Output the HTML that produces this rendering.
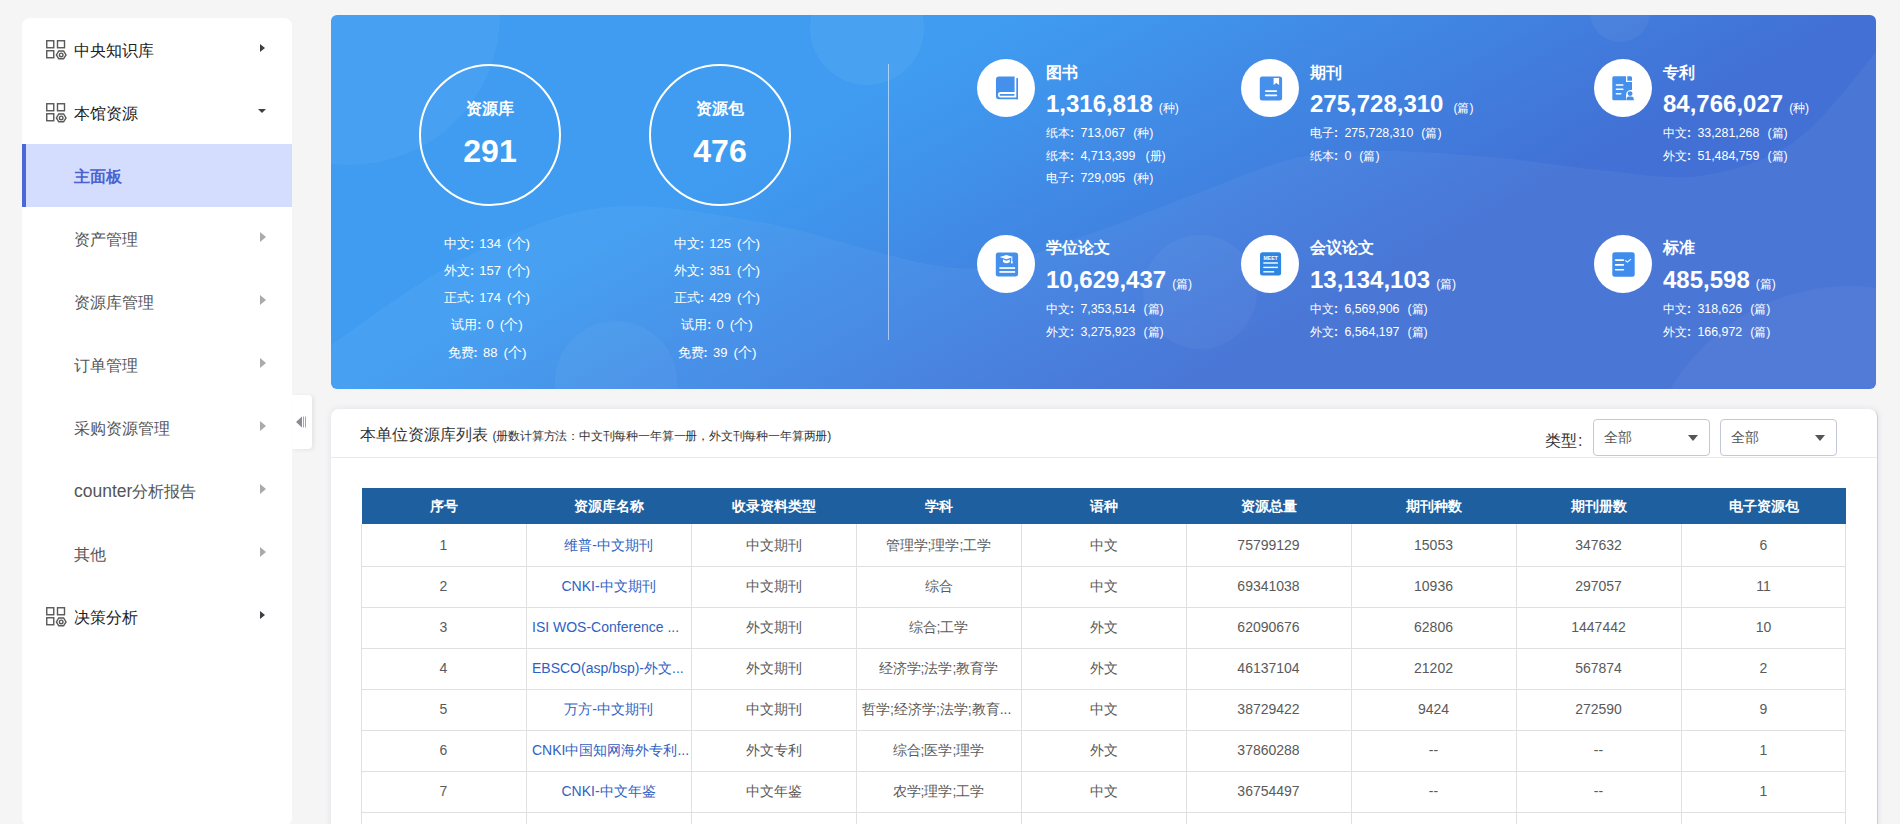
<!DOCTYPE html>
<html><head><meta charset="utf-8">
<style>
*{box-sizing:border-box;margin:0;padding:0}
html,body{width:1900px;height:824px;overflow:hidden;background:#f5f5f5;font-family:"Liberation Sans",sans-serif}
.abs{position:absolute}
#side{position:absolute;left:22px;top:18px;width:270px;height:808px;background:#fff;border-radius:8px;overflow:hidden}
.mi{position:absolute;left:0;width:270px;height:63px;font-size:16px;line-height:63px;color:#555}
.mi .t{position:absolute;left:52px;top:1px}
.mi.top{color:#222}
.mi.act{background:#d4ddfd;color:#4b62d0;font-weight:bold}
.mi.act:before{content:"";position:absolute;left:0;top:0;width:4px;height:63px;background:#4a68d6}
.arr{position:absolute;left:238px;width:0;height:0;border-top:4.7px solid transparent;border-bottom:4.7px solid transparent;border-left:5.5px solid #aaa}
.mi.top .arr{border-left-color:#3d3f47}
.ico{position:absolute;left:24px;top:22px}
#tog{position:absolute;left:292px;top:395px;width:20px;height:54px;background:#fff;border-radius:0 4px 4px 0;box-shadow:2px 1px 4px rgba(0,0,0,.07)}
#banner{position:absolute;left:331px;top:15px;width:1545px;height:374px;border-radius:6px;overflow:hidden;
 background:linear-gradient(151deg,#3f9cf1 31%,#4270d5 69%)}
.ring{position:absolute;width:142px;height:142px;border:2px solid #fff;border-radius:50%;color:#fff;text-align:center}
.ring .l{position:absolute;left:0;right:0;top:33px;font-size:16px;font-weight:bold;line-height:20px}
.ring .n{position:absolute;left:0;right:0;top:67px;font-size:32px;font-weight:bold;line-height:36px}
.st{position:absolute;width:200px;text-align:center;color:#fff;font-size:13px;line-height:16px}
.blk{position:absolute;color:#fff}
.blk .c{position:absolute;left:0;top:0;width:58px;height:58px;border-radius:50%;background:#fff}
.blk .c svg{position:absolute;left:0;top:0}
.blk .h{position:absolute;left:69px;top:5px;font-size:16px;font-weight:bold;line-height:18px;white-space:nowrap}
.blk .num{position:absolute;left:69px;top:31px;font-size:24px;font-weight:bold;line-height:28px;white-space:nowrap}
.blk .num small{font-size:12px;font-weight:normal;margin-left:6px}
.blk .s{position:absolute;left:69px;font-size:12.5px;line-height:16px;white-space:nowrap}
#card{position:absolute;left:331px;top:409px;width:1547px;height:430px;background:#fff;border-radius:8px;border-right:1px solid #c8cedb;box-shadow:0 0 6px rgba(180,190,210,.35)}
#card .title{position:absolute;left:29px;top:16px;font-size:16px;line-height:20px;color:#333;white-space:nowrap}
#card .title small{font-size:12px;color:#333;letter-spacing:-0.18px}
#card .sep{position:absolute;left:0;right:0;top:48px;height:1px;background:#e8eaf2}
.sel{position:absolute;top:10px;width:117px;height:37px;border:1px solid #c4c8d6;border-radius:4px;font-size:14px;color:#555;line-height:35px;padding-left:10px}
.sel:after{content:"";position:absolute;right:11px;top:15px;border-left:5.5px solid transparent;border-right:5.5px solid transparent;border-top:6px solid #555}
#tbl{position:absolute;left:30px;top:79px;width:1485px}
.th{position:absolute;top:0;height:36px;background:#1e5fa0;left:1px;width:1484px}
.thc{position:absolute;top:0;width:165px;height:36px;line-height:36px;text-align:center;color:#fff;font-size:14px;font-weight:bold}
.vl{position:absolute;width:1px;background:#e0e0e0}
.hl{position:absolute;height:1px;background:#e0e0e0;left:0;width:1485px}
.td{position:absolute;width:165px;height:41px;line-height:41px;text-align:center;font-size:14px;color:#5a5a5a;white-space:nowrap;overflow:hidden;padding:0 6px}
.td.b{color:#2f62c2}
.td.lft{text-align:left}

.kv .k{}
.kv .co{font-size:12px;margin-right:5.4px;font-weight:bold}
.kv .v{font-size:12px}
.kv .u{margin-left:6px}
.st.kv{font-size:12.5px}
.blk .s.kv{font-size:12.3px}
.lat{font-size:17.5px}

.st.kv .v{font-size:13px}
.st.kv .u{font-size:13.5px}
.blk .s.kv .u{margin-left:7.5px}

.mi.sub .arr{border-top-width:5px;border-bottom-width:5px;border-left-width:6px;left:237.5px}

.blk .s.kv .v{font-size:12.4px}
.blk .s.kv .co{margin-right:6.4px}
.blk .s.kv .u{margin-left:8px}
</style></head><body>
<div id="side">
<div class="mi top" style="top:0px">
<svg class="ico" width="22" height="20" viewBox="0 0 22 20"><g fill="none" stroke="#585858" stroke-width="1.4">
<rect x="0.75" y="0.75" width="7" height="7"/><rect x="11.5" y="0.75" width="7" height="7"/>
<rect x="0.75" y="10.75" width="7" height="7"/>
<path d="M12.8 11 L17.6 11 L20 14.9 L17.6 18.8 L12.8 18.8 L10.4 14.9 Z"/><circle cx="15.2" cy="14.9" r="1.8"/></g></svg>
<span class="t">中央知识库</span>
<span class="arr" style="top:25.5px"></span>
</div>
<div class="mi top" style="top:63px">
<svg class="ico" width="22" height="20" viewBox="0 0 22 20"><g fill="none" stroke="#585858" stroke-width="1.4">
<rect x="0.75" y="0.75" width="7" height="7"/><rect x="11.5" y="0.75" width="7" height="7"/>
<rect x="0.75" y="10.75" width="7" height="7"/>
<path d="M12.8 11 L17.6 11 L20 14.9 L17.6 18.8 L12.8 18.8 L10.4 14.9 Z"/><circle cx="15.2" cy="14.9" r="1.8"/></g></svg>
<span class="t">本馆资源</span>
<span class="abs" style="left:236px;top:28px;width:0;height:0;border-left:4px solid transparent;border-right:4px solid transparent;border-top:4.5px solid #3d3f47"></span>
</div>
<div class="mi act" style="top:126px">
<span class="t">主面板</span>
</div>
<div class="mi sub" style="top:189px">
<span class="t">资产管理</span>
<span class="arr" style="top:25px"></span>
</div>
<div class="mi sub" style="top:252px">
<span class="t">资源库管理</span>
<span class="arr" style="top:25px"></span>
</div>
<div class="mi sub" style="top:315px">
<span class="t">订单管理</span>
<span class="arr" style="top:25px"></span>
</div>
<div class="mi sub" style="top:378px">
<span class="t">采购资源管理</span>
<span class="arr" style="top:25px"></span>
</div>
<div class="mi sub" style="top:441px">
<span class="t"><span class="lat">counter</span>分析报告</span>
<span class="arr" style="top:25px"></span>
</div>
<div class="mi sub" style="top:504px">
<span class="t">其他</span>
<span class="arr" style="top:25px"></span>
</div>
<div class="mi top" style="top:567px">
<svg class="ico" width="22" height="20" viewBox="0 0 22 20"><g fill="none" stroke="#585858" stroke-width="1.4">
<rect x="0.75" y="0.75" width="7" height="7"/><rect x="11.5" y="0.75" width="7" height="7"/>
<rect x="0.75" y="10.75" width="7" height="7"/>
<path d="M12.8 11 L17.6 11 L20 14.9 L17.6 18.8 L12.8 18.8 L10.4 14.9 Z"/><circle cx="15.2" cy="14.9" r="1.8"/></g></svg>
<span class="t">决策分析</span>
<span class="arr" style="top:25.5px"></span>
</div>
</div>
<div id="tog"><svg class="abs" style="left:4px;top:21px" width="12" height="12" viewBox="0 0 12 12"><path d="M0 6 L6 0.5 L6 11.5 Z" fill="#8a8c94"/><rect x="7.1" y="0.5" width="0.9" height="11" fill="#9a9ca4"/><rect x="9.1" y="0.5" width="0.9" height="11" fill="#9a9ca4"/></svg></div>
<div id="banner">
<svg class="abs" style="left:0;top:0" width="1545" height="374" viewBox="0 0 1545 374">
<circle cx="19" cy="0" r="150" fill="#fff" fill-opacity="0.045"/>
<circle cx="536" cy="13" r="57" fill="#fff" fill-opacity="0.05"/>
<circle cx="285" cy="367" r="61" fill="#fff" fill-opacity="0.04"/>
<circle cx="1289" cy="-3" r="30" fill="#fff" fill-opacity="0.05"/>
<circle cx="869" cy="277" r="57" fill="#fff" fill-opacity="0.04"/>
<path d="M0 330 C21.5 315.8 84.2 267.8 129 245 C173.8 222.2 219.0 199.3 269 193 C319.0 186.7 369.5 197.0 429 207 C488.5 217.0 574.0 250.0 626 253 C678.0 256.0 700.5 237.7 741 225 C781.5 212.3 831.0 190.8 869 177 C907.0 163.2 937.3 148.8 969 142 C1000.7 135.2 1025.7 135.8 1059 136 C1092.3 136.2 1134.0 139.8 1169 143 C1204.0 146.2 1237.7 151.8 1269 155 C1300.3 158.2 1330.3 163.7 1357 162 C1383.7 160.3 1408.2 153.5 1429 145 C1449.8 136.5 1462.7 129.0 1482 111 C1501.3 93.0 1534.5 49.3 1545 37 L 1545 374 L 0 374 Z" fill="#fff" fill-opacity="0.045"/>
<circle cx="1519" cy="479" r="208" fill="#fff" fill-opacity="0.04"/>
</svg>
<div class="ring" style="left:88px;top:49px"><div class="l">资源库</div><div class="n">291</div></div>
<div class="st kv" style="left:56px;top:220.5px"><span class="k">中文</span><span class="co">:</span><span class="v">134</span><span class="u">(个)</span></div>
<div class="st kv" style="left:56px;top:247.8px"><span class="k">外文</span><span class="co">:</span><span class="v">157</span><span class="u">(个)</span></div>
<div class="st kv" style="left:56px;top:275.1px"><span class="k">正式</span><span class="co">:</span><span class="v">174</span><span class="u">(个)</span></div>
<div class="st kv" style="left:56px;top:302.4px"><span class="k">试用</span><span class="co">:</span><span class="v">0</span><span class="u">(个)</span></div>
<div class="st kv" style="left:56px;top:329.7px"><span class="k">免费</span><span class="co">:</span><span class="v">88</span><span class="u">(个)</span></div>
<div class="ring" style="left:318px;top:49px"><div class="l">资源包</div><div class="n">476</div></div>
<div class="st kv" style="left:286px;top:220.5px"><span class="k">中文</span><span class="co">:</span><span class="v">125</span><span class="u">(个)</span></div>
<div class="st kv" style="left:286px;top:247.8px"><span class="k">外文</span><span class="co">:</span><span class="v">351</span><span class="u">(个)</span></div>
<div class="st kv" style="left:286px;top:275.1px"><span class="k">正式</span><span class="co">:</span><span class="v">429</span><span class="u">(个)</span></div>
<div class="st kv" style="left:286px;top:302.4px"><span class="k">试用</span><span class="co">:</span><span class="v">0</span><span class="u">(个)</span></div>
<div class="st kv" style="left:286px;top:329.7px"><span class="k">免费</span><span class="co">:</span><span class="v">39</span><span class="u">(个)</span></div>
<div class="abs" style="left:557px;top:49px;width:1px;height:276px;background:rgba(255,255,255,.55)"></div>
<div class="blk" style="left:646px;top:44px">
<div class="c"><svg width="58" height="58" viewBox="0 0 58 58"><path d="M21.95 17.4 H37.6 V33.1 H23.65 A2.75 2.75 0 0 0 23.65 38.6 H41 V40.3 H21.95 A3 3 0 0 1 18.95 37.3 V20.4 A3 3 0 0 1 21.95 17.4 Z" fill="#4590ec"/>
<rect x="39.3" y="19.1" width="1.7" height="21.2" fill="#4590ec"/>
<rect x="22.6" y="35" width="15" height="1.7" rx=".85" fill="#4590ec"/></svg></div>
<div class="h">图书</div>
<div class="num">1,316,818<small>(种)</small></div>
<div class="s kv" style="top:66.0px"><span class="k">纸本</span><span class="co">:</span><span class="v">713,067</span><span class="u">(种)</span></div>
<div class="s kv" style="top:88.5px"><span class="k">纸本</span><span class="co">:</span><span class="v">4,713,399</span><span class="u" style="margin-left:10px">(册)</span></div>
<div class="s kv" style="top:111.0px"><span class="k">电子</span><span class="co">:</span><span class="v">729,095</span><span class="u">(种)</span></div>
</div>
<div class="blk" style="left:910px;top:44px">
<div class="c"><svg width="58" height="58" viewBox="0 0 58 58"><rect x="18.8" y="17.4" width="22.3" height="24" rx="2.5" fill="#4590ec"/>
<path d="M32.6 18.9 H38.1 V25.9 L35.35 24.1 L32.6 25.9 Z" fill="#fff"/>
<rect x="23.9" y="31.2" width="12.3" height="1.7" rx=".8" fill="#fff"/><rect x="23.9" y="35.5" width="12.3" height="1.7" rx=".8" fill="#fff"/></svg></div>
<div class="h">期刊</div>
<div class="num">275,728,310<small style="margin-left:10px">(篇)</small></div>
<div class="s kv" style="top:66.0px"><span class="k">电子</span><span class="co">:</span><span class="v">275,728,310</span><span class="u">(篇)</span></div>
<div class="s kv" style="top:88.5px"><span class="k">纸本</span><span class="co">:</span><span class="v">0</span><span class="u">(篇)</span></div>
</div>
<div class="blk" style="left:1263px;top:44px">
<div class="c"><svg width="58" height="58" viewBox="0 0 58 58"><path d="M19.8 17.2 H32 V23 H38 V31 A5 5 0 0 0 32 36 V41.2 H19.8 A1.5 1.5 0 0 1 18.3 39.7 V18.7 A1.5 1.5 0 0 1 19.8 17.2 Z" fill="#4590ec"/>
<path d="M33.3 17.2 H36.5 A1.5 1.5 0 0 1 38 18.7 V21.7 H33.3 Z" fill="#4590ec"/>
<rect x="21.6" y="25.2" width="8" height="1.6" rx=".8" fill="#fff"/><rect x="21.6" y="29.5" width="8" height="1.6" rx=".8" fill="#fff"/><rect x="21.6" y="33.9" width="6" height="1.6" rx=".8" fill="#fff"/>
<circle cx="36.1" cy="34.6" r="2.4" fill="#4590ec"/><path d="M32.4 41.2 V39.8 A2.5 2.5 0 0 1 34.9 37.6 H37.3 A2.5 2.5 0 0 1 39.8 39.8 V41.2 Z" fill="#4590ec"/></svg></div>
<div class="h">专利</div>
<div class="num">84,766,027<small>(种)</small></div>
<div class="s kv" style="top:66.0px"><span class="k">中文</span><span class="co">:</span><span class="v">33,281,268</span><span class="u">(篇)</span></div>
<div class="s kv" style="top:88.5px"><span class="k">外文</span><span class="co">:</span><span class="v">51,484,759</span><span class="u">(篇)</span></div>
</div>
<div class="blk" style="left:646px;top:220px">
<div class="c"><svg width="58" height="58" viewBox="0 0 58 58"><rect x="18.8" y="17.4" width="22.3" height="24" rx="2.5" fill="#4590ec"/>
<path d="M22.6 22.1 L29.4 19.9 L36.2 22.1 L29.4 24.3 Z" fill="#fff"/>
<path d="M26 24.6 L29.4 25.7 L32.8 24.6 V27 Q29.4 29.6 26 27 Z" fill="#fff"/>
<rect x="34.3" y="22.5" width="1" height="4.5" fill="#fff"/><rect x="33.9" y="26.4" width="1.8" height="2" fill="#fff"/>
<rect x="22.4" y="32.2" width="15.7" height="1.7" fill="#fff"/><rect x="22.4" y="36.1" width="15.7" height="1.7" fill="#fff"/></svg></div>
<div class="h" style="top:4px">学位论文</div>
<div class="num">10,629,437<small>(篇)</small></div>
<div class="s kv" style="top:66.0px"><span class="k">中文</span><span class="co">:</span><span class="v">7,353,514</span><span class="u">(篇)</span></div>
<div class="s kv" style="top:88.5px"><span class="k">外文</span><span class="co">:</span><span class="v">3,275,923</span><span class="u">(篇)</span></div>
</div>
<div class="blk" style="left:910px;top:220px">
<div class="c"><svg width="58" height="58" viewBox="0 0 58 58"><rect x="19" y="17.3" width="21.1" height="23.1" rx="2.5" fill="#2f86e2"/>
<text x="29.6" y="24.8" font-family="Liberation Sans" font-weight="bold" font-size="4.6" fill="#fff" text-anchor="middle" textLength="14.4" lengthAdjust="spacingAndGlyphs">MEET</text>
<rect x="22.3" y="27.3" width="14.6" height="1.4" fill="#fff"/><rect x="22.3" y="31.7" width="14.6" height="1.4" fill="#fff"/><rect x="22.3" y="36.1" width="10.9" height="1.4" fill="#fff"/></svg></div>
<div class="h" style="top:4px">会议论文</div>
<div class="num">13,134,103<small>(篇)</small></div>
<div class="s kv" style="top:66.0px"><span class="k">中文</span><span class="co">:</span><span class="v">6,569,906</span><span class="u">(篇)</span></div>
<div class="s kv" style="top:88.5px"><span class="k">外文</span><span class="co">:</span><span class="v">6,564,197</span><span class="u">(篇)</span></div>
</div>
<div class="blk" style="left:1263px;top:220px">
<div class="c"><svg width="58" height="58" viewBox="0 0 58 58"><rect x="18.3" y="17.3" width="22.4" height="24.4" rx="2.5" fill="#3f8cec"/>
<rect x="20.8" y="24.3" width="9.4" height="1.6" rx=".8" fill="#fff"/><rect x="20.8" y="29.1" width="9.4" height="1.6" rx=".8" fill="#fff"/><rect x="20.8" y="34" width="9.4" height="1.6" rx=".8" fill="#fff"/>
<path d="M31.3 25.3 L33.4 27.1 L36.9 24.1" fill="none" stroke="#fff" stroke-width="1.1"/></svg></div>
<div class="h" style="top:4px">标准</div>
<div class="num">485,598<small>(篇)</small></div>
<div class="s kv" style="top:66.0px"><span class="k">中文</span><span class="co">:</span><span class="v">318,626</span><span class="u">(篇)</span></div>
<div class="s kv" style="top:88.5px"><span class="k">外文</span><span class="co">:</span><span class="v">166,972</span><span class="u">(篇)</span></div>
</div>
</div>
<div id="card">
<div class="title">本单位资源库列表 <small>(册数计算方法：中文刊每种一年算一册，外文刊每种一年算两册)</small></div>
<div class="abs" style="left:1214px;top:23px;font-size:16px;line-height:18px;color:#333">类型<span style="margin-left:1px">:</span></div>
<div class="sel" style="left:1262px">全部</div>
<div class="sel" style="left:1389px">全部</div>
<div class="sep"></div>
<div id="tbl" style="left:30px;top:79px">
<div class="th"></div>
<div class="thc" style="left:0px">序号</div>
<div class="thc" style="left:165px">资源库名称</div>
<div class="thc" style="left:330px">收录资料类型</div>
<div class="thc" style="left:495px">学科</div>
<div class="thc" style="left:660px">语种</div>
<div class="thc" style="left:825px">资源总量</div>
<div class="thc" style="left:990px">期刊种数</div>
<div class="thc" style="left:1155px">期刊册数</div>
<div class="thc" style="left:1320px">电子资源包</div>
<div class="hl" style="top:78px"></div>
<div class="hl" style="top:119px"></div>
<div class="hl" style="top:160px"></div>
<div class="hl" style="top:201px"></div>
<div class="hl" style="top:242px"></div>
<div class="hl" style="top:283px"></div>
<div class="hl" style="top:324px"></div>
<div class="hl" style="top:365px"></div>
<div class="vl" style="left:0px;top:36px;height:406px"></div>
<div class="vl" style="left:165px;top:36px;height:406px"></div>
<div class="vl" style="left:330px;top:36px;height:406px"></div>
<div class="vl" style="left:495px;top:36px;height:406px"></div>
<div class="vl" style="left:660px;top:36px;height:406px"></div>
<div class="vl" style="left:825px;top:36px;height:406px"></div>
<div class="vl" style="left:990px;top:36px;height:406px"></div>
<div class="vl" style="left:1155px;top:36px;height:406px"></div>
<div class="vl" style="left:1320px;top:36px;height:406px"></div>
<div class="vl" style="left:1484px;top:36px;height:406px"></div>
<div class="td" style="left:0px;top:37px">1</div>
<div class="td b" style="left:165px;top:37px">维普-中文期刊</div>
<div class="td" style="left:330px;top:37px">中文期刊</div>
<div class="td" style="left:495px;top:37px">管理学;理学;工学</div>
<div class="td" style="left:660px;top:37px">中文</div>
<div class="td" style="left:825px;top:37px">75799129</div>
<div class="td" style="left:990px;top:37px">15053</div>
<div class="td" style="left:1155px;top:37px">347632</div>
<div class="td" style="left:1320px;top:37px">6</div>
<div class="td" style="left:0px;top:78px">2</div>
<div class="td b" style="left:165px;top:78px">CNKI-中文期刊</div>
<div class="td" style="left:330px;top:78px">中文期刊</div>
<div class="td" style="left:495px;top:78px">综合</div>
<div class="td" style="left:660px;top:78px">中文</div>
<div class="td" style="left:825px;top:78px">69341038</div>
<div class="td" style="left:990px;top:78px">10936</div>
<div class="td" style="left:1155px;top:78px">297057</div>
<div class="td" style="left:1320px;top:78px">11</div>
<div class="td" style="left:0px;top:119px">3</div>
<div class="td b lft" style="left:165px;top:119px">ISI WOS-Conference ...</div>
<div class="td" style="left:330px;top:119px">外文期刊</div>
<div class="td" style="left:495px;top:119px">综合;工学</div>
<div class="td" style="left:660px;top:119px">外文</div>
<div class="td" style="left:825px;top:119px">62090676</div>
<div class="td" style="left:990px;top:119px">62806</div>
<div class="td" style="left:1155px;top:119px">1447442</div>
<div class="td" style="left:1320px;top:119px">10</div>
<div class="td" style="left:0px;top:160px">4</div>
<div class="td b lft" style="left:165px;top:160px">EBSCO(asp/bsp)-外文...</div>
<div class="td" style="left:330px;top:160px">外文期刊</div>
<div class="td" style="left:495px;top:160px">经济学;法学;教育学</div>
<div class="td" style="left:660px;top:160px">外文</div>
<div class="td" style="left:825px;top:160px">46137104</div>
<div class="td" style="left:990px;top:160px">21202</div>
<div class="td" style="left:1155px;top:160px">567874</div>
<div class="td" style="left:1320px;top:160px">2</div>
<div class="td" style="left:0px;top:201px">5</div>
<div class="td b" style="left:165px;top:201px">万方-中文期刊</div>
<div class="td" style="left:330px;top:201px">中文期刊</div>
<div class="td lft" style="left:495px;top:201px">哲学;经济学;法学;教育...</div>
<div class="td" style="left:660px;top:201px">中文</div>
<div class="td" style="left:825px;top:201px">38729422</div>
<div class="td" style="left:990px;top:201px">9424</div>
<div class="td" style="left:1155px;top:201px">272590</div>
<div class="td" style="left:1320px;top:201px">9</div>
<div class="td" style="left:0px;top:242px">6</div>
<div class="td b lft" style="left:165px;top:242px">CNKI中国知网海外专利...</div>
<div class="td" style="left:330px;top:242px">外文专利</div>
<div class="td" style="left:495px;top:242px">综合;医学;理学</div>
<div class="td" style="left:660px;top:242px">外文</div>
<div class="td" style="left:825px;top:242px">37860288</div>
<div class="td" style="left:990px;top:242px">--</div>
<div class="td" style="left:1155px;top:242px">--</div>
<div class="td" style="left:1320px;top:242px">1</div>
<div class="td" style="left:0px;top:283px">7</div>
<div class="td b" style="left:165px;top:283px">CNKI-中文年鉴</div>
<div class="td" style="left:330px;top:283px">中文年鉴</div>
<div class="td" style="left:495px;top:283px">农学;理学;工学</div>
<div class="td" style="left:660px;top:283px">中文</div>
<div class="td" style="left:825px;top:283px">36754497</div>
<div class="td" style="left:990px;top:283px">--</div>
<div class="td" style="left:1155px;top:283px">--</div>
<div class="td" style="left:1320px;top:283px">1</div>
<div class="td" style="left:0px;top:324px"></div>
<div class="td b" style="left:165px;top:324px"></div>
<div class="td" style="left:330px;top:324px"></div>
<div class="td" style="left:495px;top:324px"></div>
<div class="td" style="left:660px;top:324px"></div>
<div class="td" style="left:825px;top:324px"></div>
<div class="td" style="left:990px;top:324px"></div>
<div class="td" style="left:1155px;top:324px"></div>
<div class="td" style="left:1320px;top:324px"></div>
</div>
</div>
</body></html>
